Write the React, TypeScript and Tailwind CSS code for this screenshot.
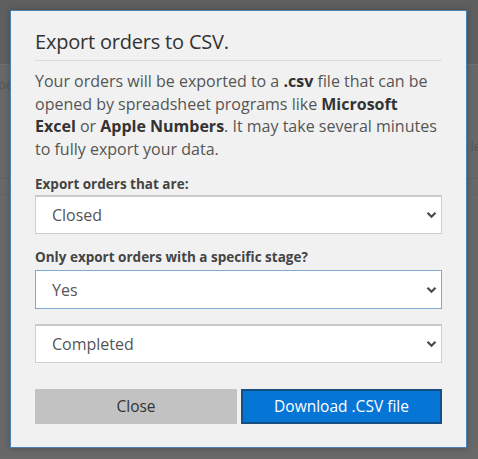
import React from "react";

function Chevron() {
  return (
    <svg width="11" height="8" viewBox="0 0 11 8" className="shrink-0">
      <path d="M1.5 1.8 L5.5 5.8 L9.5 1.8" fill="none" stroke="#4a4a4a" strokeWidth="2.2" />
    </svg>
  );
}

function Select({ value, focused }: { value: string; focused?: boolean }) {
  return (
    <div
      className={
        "flex h-[39px] items-center justify-between bg-white pl-[16px] pr-[4px] text-[16px] text-[#555] border " +
        (focused ? "border-[#7fa9cf]" : "border-[#cfcfcf] border-t-[2px] border-t-[#c9c9c9]")
      }
    >
      <span>{value}</span>
      <Chevron />
    </div>
  );
}

export default function App() {
  return (
    <div
      className="relative h-[459px] w-[478px] overflow-hidden bg-[#686868]"
      style={{ fontFamily: '"Open Sans", "Noto Sans", sans-serif' }}
    >
      <div className="h-[64px] bg-[#5f5f5f]" />
      <div className="flex h-[40px] items-center border-t border-[#707070] text-[13px] text-[#555]">
        <span className="-ml-[2px]">pe</span>
      </div>
      <div className="flex h-[74px] items-center justify-end pt-[12px] text-[13px] text-[#555]">
        <span className="mr-[-3px]">le</span>
      </div>
      <div className="h-[16px] border-t border-[#606060]" />
      <div className="h-[250px] border-t border-[#626262]" />

      <div className="absolute left-[10px] top-[10px] flex h-[438px] w-[457px] flex-col border border-[#4b82b3] bg-[#f1f1f1] px-[24px] pt-[17px] shadow-[0_0_6px_rgba(0,0,0,0.25)]">
        <h2 className="text-[20px] leading-[28px] text-[#333] tracking-[-0.2px]">Export orders to CSV.</h2>
        <div className="mt-[4px] h-px bg-[#dcdcdc]" />
        <p className="mt-[9px] whitespace-nowrap text-[16px] leading-[22.5px] text-[#555]">
          Your orders will be exported to a <b className="text-[#333]">.csv</b> file that can be
          <br />
          opened by spreadsheet programs like <b className="text-[#333]">Microsoft</b>
          <br />
          <b className="text-[#333]">Excel</b> or <b className="text-[#333]">Apple Numbers</b>. It may take several minutes
          <br />
          to fully export your data.
        </p>
        <label className="mt-[15px] text-[13.5px] font-bold leading-[18px] text-[#444]">Export orders that are:</label>
        <div className="mt-[2px]">
          <Select value="Closed" />
        </div>
        <label className="mt-[14px] text-[13.5px] font-bold leading-[18px] text-[#444]">Only export orders with a specific stage?</label>
        <div className="mt-[4px]">
          <Select value="Yes" focused />
        </div>
        <div className="mt-[15px]">
          <Select value="Completed" />
        </div>
        <div className="mt-[26px] flex gap-[4px]">
          <button className="h-[35px] w-[202px] bg-[#c2c2c2] text-[15.5px] text-[#333]">Close</button>
          <button className="h-[35px] flex-1 border-2 border-[#164f82] bg-[#0575d6] text-[15.5px] text-white">
            Download .CSV file
          </button>
        </div>
      </div>
    </div>
  );
}
